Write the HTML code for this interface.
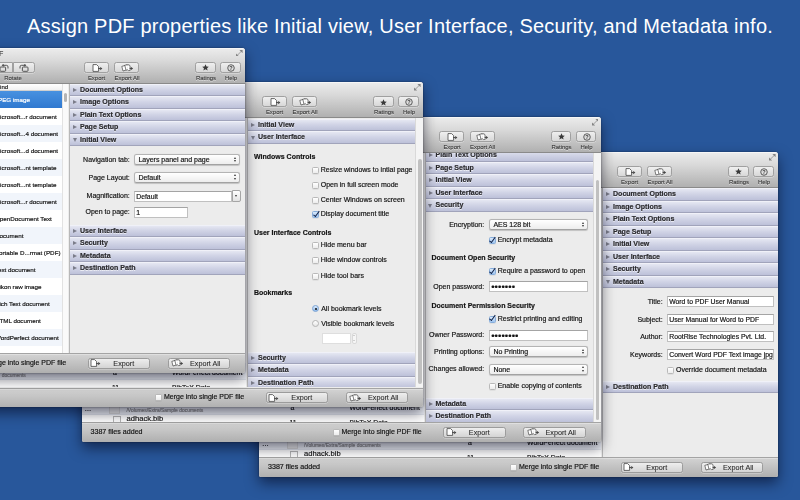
<!DOCTYPE html>
<html lang="en"><head><meta charset="utf-8"><title>Assign PDF properties</title>
<style>
*{box-sizing:border-box}
html,body{margin:0;padding:0}
body{width:800px;height:500px;overflow:hidden;position:relative;background:#28579b;font-family:"Liberation Sans",sans-serif;font-size:7px;color:#141414;line-height:8px}
.win{-webkit-text-stroke:.18px currentColor;filter:blur(.38px)}
.title{position:absolute;left:0;top:13.2px;width:800px;text-align:center;color:#fff;font-size:20px;line-height:26px;white-space:nowrap;letter-spacing:.215px}
.win{position:absolute;width:519px;height:325px;border-radius:3px 3px 2px 2px;box-shadow:0 6px 14px rgba(0,0,20,.55),0 0 2px rgba(0,0,0,.5);background:#ececec;overflow:hidden}
.a{position:absolute;white-space:nowrap}
.tb{position:absolute;left:0;top:0;width:519px;height:36px;background:linear-gradient(#ebebeb 0%,#d9d9d9 35%,#b0b0b0 100%);border-bottom:1px solid #8a8a8a;border-top:1px solid #f6f6f6}
.bb{position:absolute;left:0;top:305.3px;width:519px;height:20px;background:linear-gradient(#d3d3d3,#afafaf);border-top:1px solid #a4a4a4;box-shadow:inset 0 1px 0 rgba(255,255,255,.3)}
.tbtn{position:absolute;height:11px;border:1px solid #a0a0a0;border-radius:2.5px;background:linear-gradient(#efefef,#d8d8d8);box-shadow:0 .5px 0 rgba(255,255,255,.6)}
.tlab{position:absolute;font-size:5.95px;color:#383838;-webkit-text-stroke:.1px currentColor;text-align:center;width:40px;text-shadow:0 .5px 0 rgba(255,255,255,.6)}
.bbtn{position:absolute;top:310px;height:11px;border:1px solid #9c9c9c;border-radius:2.5px;background:linear-gradient(#eeeeee,#d4d4d4);font-size:7.2px;line-height:9px;text-align:center;color:#2b2b2b;-webkit-text-stroke:.08px currentColor;box-shadow:0 .5px 0 rgba(255,255,255,.5)}
.list{position:absolute;left:0;top:36px;width:342px;height:269px;background:#fff;overflow:hidden}
.row{position:absolute;left:0;width:336px;height:17px}
.row.alt{background:#f1f5fb}
.row.sel{background:linear-gradient(#4891e0,#3079d0);color:#fff}
.panel{position:absolute;left:343px;top:36px;width:176px;height:269px;background:#ececec;overflow:hidden;border-left:1px solid #b8b8b8}
.hd{position:absolute;left:0;height:12.5px;background:linear-gradient(#e5e7f2 0%,#d1d4e6 45%,#bdc1d9 100%);border-bottom:1px solid #a1a4bb;border-top:1px solid #f0f1f8;font-weight:bold;font-size:7.05px;color:#2a2a2e;line-height:10px;text-shadow:0 .5px 0 rgba(255,255,255,.7);white-space:nowrap}
.hd i{position:absolute;left:3px;top:3px;width:0;height:0;border-style:solid}
.hd i.r{border-width:2.2px 0 2.2px 4px;border-color:transparent transparent transparent #7b7d8a}
.hd i.d{left:2.5px;top:3.6px;border-width:4px 2.3px 0 2.3px;border-color:#7b7d8a transparent transparent transparent}
.hd span{position:absolute;left:10px;top:0}
.lab{position:absolute;text-align:right;white-space:nowrap;width:80px;font-size:7px}
.b{font-weight:bold;font-size:7px}
.pop{position:absolute;height:11px;border:1px solid #b4b4b4;border-bottom-color:#a2a2a2;border-radius:2.5px;background:linear-gradient(#ffffff,#ededed);font-size:7px;line-height:9px;padding-left:3.4px;white-space:nowrap;box-shadow:0 .5px .8px rgba(0,0,0,.18)}
.pop:after{content:"";position:absolute;right:3px;top:1.6px;border:1.4px solid transparent;border-bottom:2px solid #333;border-top:0}
.pop:before{content:"";position:absolute;right:3px;top:5.2px;border:1.4px solid transparent;border-top:2px solid #333;border-bottom:0}
.fld{position:absolute;height:11px;border:1px solid #c0c0c0;border-top-color:#a4a4a4;background:#fff;font-size:6.85px;line-height:9px;padding-left:1.2px;white-space:nowrap;overflow:hidden}
.cb{position:absolute;width:7px;height:7px;border:1px solid #b9b9b9;border-radius:1.5px;background:linear-gradient(#fff,#ececec);box-shadow:0 .5px .5px rgba(0,0,0,.1)}
.cb.on{background:linear-gradient(#dbeafb,#9dc4ef);border-color:#86addb}
.cb.on:after{content:"";position:absolute;left:1.5px;top:-2.6px;width:2.3px;height:5.6px;border:solid #13244a;border-width:0 1.35px 1.35px 0;transform:rotate(36deg)}
.rd{position:absolute;width:7px;height:7px;border:1px solid #b4b4b4;border-radius:50%;background:linear-gradient(#fff,#e6e6e6)}
.rd.on{background:linear-gradient(#dbeafb,#8fbaec);border-color:#7ba3d4}
.rd.on:after{content:"";position:absolute;left:1.5px;top:1.5px;width:2px;height:2px;border-radius:50%;background:#111}
.sb{position:absolute;left:167px;top:0;width:8px;height:269px;background:#f4f4f4;border-left:1px solid #d9d9d9}
.sb b{position:absolute;left:2px;width:3.5px;border-radius:2px;background:#c0c0c0}
.g{color:#8a8a8a;font-size:4.95px;line-height:6.6px}
</style></head>
<body>
<div class="title">Assign PDF properties like Initial view, User Interface, Security, and Metadata info.</div>
<div class="win" style="left:259px;top:152px"><div class="list"><div class="a" style="left:0;top:245px;width:342px;height:17px;background:#eff2f8;border-bottom:1px solid #e3e7ee"></div><div class="a" style="left:3px;top:251.5px;font-size:6.9px">&hellip;</div><div class="a" style="left:3px;top:264.5px;font-size:6.9px">&hellip;</div><div class="a" style="left:27.5px;top:246px;width:11px;height:15px;background:#ececec;border:1px solid #dadada"></div><div class="a" style="left:31px;top:263.3px;width:8px;height:11px;background:#fdfdfd;border:1px solid #b5b5b5"></div><div class="a g" style="left:45px;top:255.2px">/Volumes/Extra/Sample documents</div><div class="a" style="left:45px;top:262.4px;font-size:7.6px">adhack.bib</div><div class="a" style="left:268px;top:250.8px;font-size:6.9px">WordPerfect document</div><div class="a" style="left:209px;top:250.8px;font-size:6.9px">a</div><div class="a" style="left:208px;top:266px;font-size:6.9px">11</div><div class="a" style="left:268px;top:266px;font-size:6.9px">BibTeX Data&hellip;</div></div><div class="panel"><div class="hd" style="top:0px;width:176px"><i class="r"></i><span>Document Options</span></div><div class="hd" style="top:12.5px;width:176px"><i class="r"></i><span>Image Options</span></div><div class="hd" style="top:25.0px;width:176px"><i class="r"></i><span>Plain Text Options</span></div><div class="hd" style="top:37.5px;width:176px"><i class="r"></i><span>Page Setup</span></div><div class="hd" style="top:50.0px;width:176px"><i class="r"></i><span>Initial View</span></div><div class="hd" style="top:62.5px;width:176px"><i class="r"></i><span>User Interface</span></div><div class="hd" style="top:75.0px;width:176px"><i class="r"></i><span>Security</span></div><div class="hd" style="top:87.5px;width:176px"><i class="d"></i><span>Metadata</span></div><div class="lab" style="left:-20.299999999999997px;top:109.5px">Title:</div><div class="fld" style="left:64px;top:107.9px;width:107px">Word to PDF User Manual</div><div class="lab" style="left:-20.299999999999997px;top:127.60000000000001px">Subject:</div><div class="fld" style="left:64px;top:125.6px;width:107px">User Manual for Word to PDF</div><div class="lab" style="left:-20.299999999999997px;top:144.5px">Author:</div><div class="fld" style="left:64px;top:143.0px;width:107px">RootRise Technologies Pvt. Ltd.</div><div class="lab" style="left:-20.299999999999997px;top:162.6px">Keywords:</div><div class="fld" style="left:64px;top:160.5px;width:107px">Convert Word PDF Text image jpg png</div><div class="cb" style="left:64.2px;top:179.0px"></div><div class="a " style="left:73px;top:178.0px">Override document metadata</div><div class="hd" style="top:192.75px;width:176px"><i class="r"></i><span>Destination Path</span></div></div><div class="tb"><div class="tbtn" style="left:357.8px;top:13.2px;width:24.8px"></div><svg class="a" style="left:365.5px;top:15.1px" width="11" height="8" viewBox="0 0 11 8"><path d="M1 .6h3.6l2 2V7.4H1z" fill="#fff" stroke="#444" stroke-width=".8"/><path d="M6.2 4.6h2.2" stroke="#444" stroke-width="1"/><path d="M8.2 3l2.2 1.6-2.2 1.6z" fill="#444"/></svg><div class="tlab" style="left:350.5px;top:25px">Export</div><div class="tbtn" style="left:388px;top:13.2px;width:25px"></div><svg class="a" style="left:394.5px;top:15.1px" width="13" height="8" viewBox="0 0 13 8"><path d="M.8 2.4l3-.9 1.2 4.6-3 .9z M3.2 1.5l3-.9 1.4 4.8-2.6.9" fill="#fff" stroke="#444" stroke-width=".7"/><path d="M5.6 1l2.6-.2.8 1.2.2 4.4-2 .2" fill="#fff" stroke="#444" stroke-width=".7"/><path d="M8.6 4.4h1.6" stroke="#444" stroke-width="1"/><path d="M10 2.9l2.2 1.5L10 5.9z" fill="#444"/></svg><div class="tlab" style="left:381px;top:25px">Export All</div><div class="tbtn" style="left:469.2px;top:13.2px;width:20.6px"></div><svg class="a" style="left:476px;top:15.4px" width="7" height="7" viewBox="0 0 10 10"><path d="M5 .4l1.4 3.1 3.3.3-2.5 2.2.8 3.3L5 7.6 2 9.3l.8-3.3L.3 3.8l3.3-.3z" fill="#3a3a3a"/></svg><div class="tlab" style="left:460px;top:25px">Ratings</div><div class="tbtn" style="left:494.2px;top:13.2px;width:20.6px"></div><svg class="a" style="left:501px;top:15.2px" width="8" height="8" viewBox="0 0 10 10"><circle cx="5" cy="5" r="4.1" fill="none" stroke="#3a3a3a" stroke-width="1"/><text x="5" y="7.6" font-size="7" font-weight="bold" text-anchor="middle" fill="#3a3a3a" font-family="Liberation Sans, sans-serif">?</text></svg><div class="tlab" style="left:485px;top:25px">Help</div><svg class="a" style="left:510.2px;top:1px" width="6.6" height="6.6" viewBox="0 0 7 7"><path d="M3.6 0H7v3.4z M0 3.6V7h3.4z" fill="#858585"/><path d="M6 1L1 6" stroke="#858585" stroke-width=".8"/></svg></div><div class="bb"></div><div class="a" style="left:9px;top:311.2px;font-size:7.1px">3387 files added</div><div class="cb" style="left:251.4px;top:311.6px"></div><div class="a" style="left:260px;top:311.2px;font-size:7px">Merge into single PDF file</div><div class="bbtn" style="left:361.5px;width:62.5px;padding-left:10px">Export</div><svg class="a" style="left:364.2px;top:311.3px" width="11" height="8" viewBox="0 0 11 8"><path d="M1 .6h3.6l2 2V7.4H1z" fill="#fff" stroke="#444" stroke-width=".8"/><path d="M6.2 4.6h2.2" stroke="#444" stroke-width="1"/><path d="M8.2 3l2.2 1.6-2.2 1.6z" fill="#444"/></svg><div class="bbtn" style="left:441.5px;width:62.5px;padding-left:13px">Export All</div><svg class="a" style="left:445px;top:311.3px" width="13" height="8" viewBox="0 0 13 8"><path d="M.8 2.4l3-.9 1.2 4.6-3 .9z M3.2 1.5l3-.9 1.4 4.8-2.6.9" fill="#fff" stroke="#444" stroke-width=".7"/><path d="M5.6 1l2.6-.2.8 1.2.2 4.4-2 .2" fill="#fff" stroke="#444" stroke-width=".7"/><path d="M8.6 4.4h1.6" stroke="#444" stroke-width="1"/><path d="M10 2.9l2.2 1.5L10 5.9z" fill="#444"/></svg></div>
<div class="win" style="left:81.5px;top:117px"><div class="list"><div class="a" style="left:0;top:245px;width:342px;height:17px;background:#eff2f8;border-bottom:1px solid #e3e7ee"></div><div class="a" style="left:3px;top:251.5px;font-size:6.9px">&hellip;</div><div class="a" style="left:3px;top:264.5px;font-size:6.9px">&hellip;</div><div class="a" style="left:27.5px;top:246px;width:11px;height:15px;background:#ececec;border:1px solid #dadada"></div><div class="a" style="left:31px;top:263.3px;width:8px;height:11px;background:#fdfdfd;border:1px solid #b5b5b5"></div><div class="a g" style="left:45px;top:255.2px">/Volumes/Extra/Sample documents</div><div class="a" style="left:45px;top:262.4px;font-size:7.6px">adhack.bib</div><div class="a" style="left:268px;top:250.8px;font-size:6.9px">WordPerfect document</div><div class="a" style="left:209px;top:250.8px;font-size:6.9px">a</div><div class="a" style="left:208px;top:266px;font-size:6.9px">11</div><div class="a" style="left:268px;top:266px;font-size:6.9px">BibTeX Data&hellip;</div></div><div class="panel" style="top:35px;height:270px"><div class="hd" style="top:-3px;width:167px"><i class="r"></i><span>Plain Text Options</span></div><div class="hd" style="top:9.5px;width:167px"><i class="r"></i><span>Page Setup</span></div><div class="hd" style="top:22.0px;width:167px"><i class="r"></i><span>Initial View</span></div><div class="hd" style="top:34.5px;width:167px"><i class="r"></i><span>User Interface</span></div><div class="hd" style="top:47.0px;width:167px"><i class="d"></i><span>Security</span></div><div class="lab" style="left:-21.299999999999997px;top:68.5px">Encryption:</div><div class="pop" style="left:63.5px;top:67.1px;width:98.5px">AES 128 bit</div><div class="cb on" style="left:63.2px;top:85.10000000000001px"></div><div class="a " style="left:72.2px;top:84.10000000000001px">Encrypt metadata</div><div class="a b" style="left:6px;top:102.2px">Document Open Security</div><div class="cb on" style="left:63.2px;top:116.2px"></div><div class="a " style="left:72.2px;top:115.2px">Require a password to open</div><div class="lab" style="left:-21.299999999999997px;top:130.5px">Open password:</div><div class="fld" style="left:63.5px;top:129.1px;width:98.5px"><span style="font-size:9.6px;letter-spacing:.05px">&bull;&bull;&bull;&bull;&bull;&bull;&bull;</span></div><div class="a b" style="left:6px;top:150.2px">Document Permission Security</div><div class="cb on" style="left:63.2px;top:163.7px"></div><div class="a " style="left:72.2px;top:162.7px">Restrict printing and editing</div><div class="lab" style="left:-21.299999999999997px;top:178.89999999999998px">Owner Password:</div><div class="fld" style="left:63.5px;top:177.5px;width:98.5px"><span style="font-size:9.6px;letter-spacing:.05px">&bull;&bull;&bull;&bull;&bull;&bull;&bull;&bull;</span></div><div class="lab" style="left:-21.299999999999997px;top:196.2px">Printing options:</div><div class="pop" style="left:63.5px;top:194.1px;width:98.5px">No Printing</div><div class="lab" style="left:-21.299999999999997px;top:213.2px">Changes allowed:</div><div class="pop" style="left:63.5px;top:211.5px;width:98.5px">None</div><div class="cb" style="left:63.2px;top:231.2px"></div><div class="a " style="left:72.2px;top:230.2px">Enable copying of contents</div><div class="hd" style="top:245.5px;width:167px"><i class="r"></i><span>Metadata</span></div><div class="hd" style="top:258px;width:167px"><i class="r"></i><span>Destination Path</span></div><div class="sb" style="height:270px"><b style="top:28px;height:240px"></b></div></div><div class="tb"><div class="tbtn" style="left:357.8px;top:13.2px;width:24.8px"></div><svg class="a" style="left:365.5px;top:15.1px" width="11" height="8" viewBox="0 0 11 8"><path d="M1 .6h3.6l2 2V7.4H1z" fill="#fff" stroke="#444" stroke-width=".8"/><path d="M6.2 4.6h2.2" stroke="#444" stroke-width="1"/><path d="M8.2 3l2.2 1.6-2.2 1.6z" fill="#444"/></svg><div class="tlab" style="left:350.5px;top:25px">Export</div><div class="tbtn" style="left:388px;top:13.2px;width:25px"></div><svg class="a" style="left:394.5px;top:15.1px" width="13" height="8" viewBox="0 0 13 8"><path d="M.8 2.4l3-.9 1.2 4.6-3 .9z M3.2 1.5l3-.9 1.4 4.8-2.6.9" fill="#fff" stroke="#444" stroke-width=".7"/><path d="M5.6 1l2.6-.2.8 1.2.2 4.4-2 .2" fill="#fff" stroke="#444" stroke-width=".7"/><path d="M8.6 4.4h1.6" stroke="#444" stroke-width="1"/><path d="M10 2.9l2.2 1.5L10 5.9z" fill="#444"/></svg><div class="tlab" style="left:381px;top:25px">Export All</div><div class="tbtn" style="left:469.2px;top:13.2px;width:20.6px"></div><svg class="a" style="left:476px;top:15.4px" width="7" height="7" viewBox="0 0 10 10"><path d="M5 .4l1.4 3.1 3.3.3-2.5 2.2.8 3.3L5 7.6 2 9.3l.8-3.3L.3 3.8l3.3-.3z" fill="#3a3a3a"/></svg><div class="tlab" style="left:460px;top:25px">Ratings</div><div class="tbtn" style="left:494.2px;top:13.2px;width:20.6px"></div><svg class="a" style="left:501px;top:15.2px" width="8" height="8" viewBox="0 0 10 10"><circle cx="5" cy="5" r="4.1" fill="none" stroke="#3a3a3a" stroke-width="1"/><text x="5" y="7.6" font-size="7" font-weight="bold" text-anchor="middle" fill="#3a3a3a" font-family="Liberation Sans, sans-serif">?</text></svg><div class="tlab" style="left:485px;top:25px">Help</div><svg class="a" style="left:510.2px;top:1px" width="6.6" height="6.6" viewBox="0 0 7 7"><path d="M3.6 0H7v3.4z M0 3.6V7h3.4z" fill="#858585"/><path d="M6 1L1 6" stroke="#858585" stroke-width=".8"/></svg></div><div class="bb"></div><div class="a" style="left:9px;top:311.2px;font-size:7.1px">3387 files added</div><div class="cb" style="left:251.4px;top:311.6px"></div><div class="a" style="left:260px;top:311.2px;font-size:7px">Merge into single PDF file</div><div class="bbtn" style="left:361.5px;width:62.5px;padding-left:10px">Export</div><svg class="a" style="left:364.2px;top:311.3px" width="11" height="8" viewBox="0 0 11 8"><path d="M1 .6h3.6l2 2V7.4H1z" fill="#fff" stroke="#444" stroke-width=".8"/><path d="M6.2 4.6h2.2" stroke="#444" stroke-width="1"/><path d="M8.2 3l2.2 1.6-2.2 1.6z" fill="#444"/></svg><div class="bbtn" style="left:441.5px;width:62.5px;padding-left:13px">Export All</div><svg class="a" style="left:445px;top:311.3px" width="13" height="8" viewBox="0 0 13 8"><path d="M.8 2.4l3-.9 1.2 4.6-3 .9z M3.2 1.5l3-.9 1.4 4.8-2.6.9" fill="#fff" stroke="#444" stroke-width=".7"/><path d="M5.6 1l2.6-.2.8 1.2.2 4.4-2 .2" fill="#fff" stroke="#444" stroke-width=".7"/><path d="M8.6 4.4h1.6" stroke="#444" stroke-width="1"/><path d="M10 2.9l2.2 1.5L10 5.9z" fill="#444"/></svg></div>
<div class="win" style="left:-96px;top:82.3px"><div class="list"><div class="a" style="left:0;top:245px;width:342px;height:17px;background:#eff2f8;border-bottom:1px solid #e3e7ee"></div><div class="a" style="left:3px;top:251.5px;font-size:6.9px">&hellip;</div><div class="a" style="left:3px;top:264.5px;font-size:6.9px">&hellip;</div><div class="a" style="left:27.5px;top:246px;width:11px;height:15px;background:#ececec;border:1px solid #dadada"></div><div class="a" style="left:31px;top:263.3px;width:8px;height:11px;background:#fdfdfd;border:1px solid #b5b5b5"></div><div class="a g" style="left:45px;top:255.2px">/Volumes/Extra/Sample documents</div><div class="a" style="left:45px;top:262.4px;font-size:7.6px">adhack.bib</div><div class="a" style="left:268px;top:250.8px;font-size:6.9px">WordPerfect document</div><div class="a" style="left:209px;top:250.8px;font-size:6.9px">a</div><div class="a" style="left:208px;top:266px;font-size:6.9px">11</div><div class="a" style="left:268px;top:266px;font-size:6.9px">BibTeX Data&hellip;</div></div><div class="panel"><div class="hd" style="top:0.5px;width:167px"><i class="r"></i><span>Initial View</span></div><div class="hd" style="top:13px;width:167px"><i class="d"></i><span>User Interface</span></div><div class="a b" style="left:6px;top:34.7px">Windows Controls</div><div class="cb" style="left:64.2px;top:48.5px"></div><div class="a " style="left:72.7px;top:47.5px">Resize windows to intial page</div><div class="cb" style="left:64.2px;top:63.5px"></div><div class="a " style="left:72.7px;top:62.5px">Open in full screen mode</div><div class="cb" style="left:64.2px;top:78.3px"></div><div class="a " style="left:72.7px;top:77.3px">Center Windows on screen</div><div class="cb on" style="left:64.2px;top:93.2px"></div><div class="a " style="left:72.7px;top:92.2px">Display document title</div><div class="a b" style="left:6px;top:110.45px">User Interface Controls</div><div class="cb" style="left:64.2px;top:124.2px"></div><div class="a " style="left:72.7px;top:123.2px">Hide menu bar</div><div class="cb" style="left:64.2px;top:139.2px"></div><div class="a " style="left:72.7px;top:138.2px">Hide window controls</div><div class="cb" style="left:64.2px;top:154.39999999999998px"></div><div class="a " style="left:72.7px;top:153.39999999999998px">Hide tool bars</div><div class="a b" style="left:6px;top:170.5px">Bookmarks</div><div class="rd on" style="left:64.3px;top:186.8px"></div><div class="a " style="left:73.2px;top:186.6px">All bookmark levels</div><div class="rd" style="left:64.3px;top:201.9px"></div><div class="a " style="left:73.2px;top:201.7px">Visible bookmark levels</div><div class="fld" style="left:74px;top:215px;width:29px;height:10.5px;border-color:#dedede"></div><div class="a" style="left:103.5px;top:215px;width:5px;height:10.5px;border:1px solid #d9d9d9;border-radius:2px;background:#f6f6f6"></div><i class="a" style="left:104.7px;top:217px;border:1.3px solid transparent;border-bottom:1.8px solid #aaa;border-top:0"></i><i class="a" style="left:104.7px;top:221.6px;border:1.3px solid transparent;border-top:1.8px solid #aaa;border-bottom:0"></i><div class="hd" style="top:233.3px;width:167px"><i class="r"></i><span>Security</span></div><div class="hd" style="top:245.8px;width:167px"><i class="r"></i><span>Metadata</span></div><div class="hd" style="top:258.3px;width:167px"><i class="r"></i><span>Destination Path</span></div><div class="sb"><b style="top:41px;height:225px"></b></div></div><div class="tb"><div class="tbtn" style="left:357.8px;top:13.2px;width:24.8px"></div><svg class="a" style="left:365.5px;top:15.1px" width="11" height="8" viewBox="0 0 11 8"><path d="M1 .6h3.6l2 2V7.4H1z" fill="#fff" stroke="#444" stroke-width=".8"/><path d="M6.2 4.6h2.2" stroke="#444" stroke-width="1"/><path d="M8.2 3l2.2 1.6-2.2 1.6z" fill="#444"/></svg><div class="tlab" style="left:350.5px;top:25px">Export</div><div class="tbtn" style="left:388px;top:13.2px;width:25px"></div><svg class="a" style="left:394.5px;top:15.1px" width="13" height="8" viewBox="0 0 13 8"><path d="M.8 2.4l3-.9 1.2 4.6-3 .9z M3.2 1.5l3-.9 1.4 4.8-2.6.9" fill="#fff" stroke="#444" stroke-width=".7"/><path d="M5.6 1l2.6-.2.8 1.2.2 4.4-2 .2" fill="#fff" stroke="#444" stroke-width=".7"/><path d="M8.6 4.4h1.6" stroke="#444" stroke-width="1"/><path d="M10 2.9l2.2 1.5L10 5.9z" fill="#444"/></svg><div class="tlab" style="left:381px;top:25px">Export All</div><div class="tbtn" style="left:469.2px;top:13.2px;width:20.6px"></div><svg class="a" style="left:476px;top:15.4px" width="7" height="7" viewBox="0 0 10 10"><path d="M5 .4l1.4 3.1 3.3.3-2.5 2.2.8 3.3L5 7.6 2 9.3l.8-3.3L.3 3.8l3.3-.3z" fill="#3a3a3a"/></svg><div class="tlab" style="left:460px;top:25px">Ratings</div><div class="tbtn" style="left:494.2px;top:13.2px;width:20.6px"></div><svg class="a" style="left:501px;top:15.2px" width="8" height="8" viewBox="0 0 10 10"><circle cx="5" cy="5" r="4.1" fill="none" stroke="#3a3a3a" stroke-width="1"/><text x="5" y="7.6" font-size="7" font-weight="bold" text-anchor="middle" fill="#3a3a3a" font-family="Liberation Sans, sans-serif">?</text></svg><div class="tlab" style="left:485px;top:25px">Help</div><svg class="a" style="left:510.2px;top:1px" width="6.6" height="6.6" viewBox="0 0 7 7"><path d="M3.6 0H7v3.4z M0 3.6V7h3.4z" fill="#858585"/><path d="M6 1L1 6" stroke="#858585" stroke-width=".8"/></svg></div><div class="bb"></div><div class="a" style="left:9px;top:311.2px;font-size:7.1px">3387 files added</div><div class="cb" style="left:251.4px;top:311.6px"></div><div class="a" style="left:260px;top:311.2px;font-size:7px">Merge into single PDF file</div><div class="bbtn" style="left:361.5px;width:62.5px;padding-left:10px">Export</div><svg class="a" style="left:364.2px;top:311.3px" width="11" height="8" viewBox="0 0 11 8"><path d="M1 .6h3.6l2 2V7.4H1z" fill="#fff" stroke="#444" stroke-width=".8"/><path d="M6.2 4.6h2.2" stroke="#444" stroke-width="1"/><path d="M8.2 3l2.2 1.6-2.2 1.6z" fill="#444"/></svg><div class="bbtn" style="left:441.5px;width:62.5px;padding-left:13px">Export All</div><svg class="a" style="left:445px;top:311.3px" width="13" height="8" viewBox="0 0 13 8"><path d="M.8 2.4l3-.9 1.2 4.6-3 .9z M3.2 1.5l3-.9 1.4 4.8-2.6.9" fill="#fff" stroke="#444" stroke-width=".7"/><path d="M5.6 1l2.6-.2.8 1.2.2 4.4-2 .2" fill="#fff" stroke="#444" stroke-width=".7"/><path d="M8.6 4.4h1.6" stroke="#444" stroke-width="1"/><path d="M10 2.9l2.2 1.5L10 5.9z" fill="#444"/></svg></div>
<div class="win" style="left:-274px;top:47.5px"><div class="list"><div class="a" style="left:0;top:0;width:336px;height:7.5px;background:linear-gradient(#fff,#f1f1f1);border-bottom:1px solid #d0d0d0"></div><div class="a" style="left:270px;top:-0.3px;font-size:6.1px;color:#222">Kind</div><div class="row sel" style="top:7.5px"><div class="a" style="left:268.9px;top:4.5px;font-size:6.25px">JPEG image</div></div><div class="row" style="top:24.5px"><div class="a" style="left:268.9px;top:4.5px;font-size:6.25px">Microsoft...r document</div></div><div class="row alt" style="top:41.5px"><div class="a" style="left:268.9px;top:4.5px;font-size:6.25px">Microsoft...4 document</div></div><div class="row" style="top:58.5px"><div class="a" style="left:268.9px;top:4.5px;font-size:6.25px">Microsoft...d document</div></div><div class="row alt" style="top:75.5px"><div class="a" style="left:268.9px;top:4.5px;font-size:6.25px">Microsoft...nt template</div></div><div class="row" style="top:92.5px"><div class="a" style="left:268.9px;top:4.5px;font-size:6.25px">Microsoft...nt template</div></div><div class="row alt" style="top:109.5px"><div class="a" style="left:268.9px;top:4.5px;font-size:6.25px">Microsoft...r document</div></div><div class="row" style="top:126.5px"><div class="a" style="left:268.9px;top:4.5px;font-size:6.25px">OpenDocument Text</div></div><div class="row alt" style="top:143.5px"><div class="a" style="left:268.9px;top:4.5px;font-size:6.25px">Document</div></div><div class="row" style="top:160.5px"><div class="a" style="left:268.9px;top:4.5px;font-size:6.25px">Portable D...rmat (PDF)</div></div><div class="row alt" style="top:177.5px"><div class="a" style="left:268.9px;top:4.5px;font-size:6.25px">Text document</div></div><div class="row" style="top:194.5px"><div class="a" style="left:268.9px;top:4.5px;font-size:6.25px">Nikon raw image</div></div><div class="row alt" style="top:211.5px"><div class="a" style="left:268.9px;top:4.5px;font-size:6.25px">Rich Text document</div></div><div class="row" style="top:228.5px"><div class="a" style="left:268.9px;top:4.5px;font-size:6.25px">HTML document</div></div><div class="row alt" style="top:245.5px"><div class="a" style="left:268.9px;top:4.5px;font-size:6.25px">WordPerfect document</div></div><div class="row" style="top:262.5px"><div class="a" style="left:268.9px;top:4.5px;font-size:6.25px">BibTeX document</div></div><div class="a" style="left:336px;top:0;width:6px;height:269px;background:#fafafa;border-left:1px solid #e2e2e2"></div><div class="a" style="left:338px;top:9px;width:3px;height:9px;border-radius:1.5px;background:#b5b5b5"></div></div><div class="panel"><div class="hd" style="top:0px;width:176px"><i class="r"></i><span>Document Options</span></div><div class="hd" style="top:12.5px;width:176px"><i class="r"></i><span>Image Options</span></div><div class="hd" style="top:25.0px;width:176px"><i class="r"></i><span>Plain Text Options</span></div><div class="hd" style="top:37.5px;width:176px"><i class="r"></i><span>Page Setup</span></div><div class="hd" style="top:50.0px;width:176px"><i class="d"></i><span>Initial View</span></div><div class="lab" style="left:-20.200000000000003px;top:72.0px">Navigation tab:</div><div class="pop" style="left:64px;top:70.6px;width:106px">Layers panel and page</div><div class="lab" style="left:-20.200000000000003px;top:90.10000000000001px">Page Layout:</div><div class="pop" style="left:64px;top:88.3px;width:106px">Default</div><div class="lab" style="left:-20.200000000000003px;top:108.5px">Magnification:</div><div class="fld" style="left:64px;top:107.0px;width:97.5px">Default</div><div class="a" style="left:162px;top:106.9px;width:8.5px;height:11.5px;border:1px solid #a5a5a5;border-radius:0 2px 2px 0;background:linear-gradient(#fff,#e2e2e2)"><i style="position:absolute;left:1.8px;top:3.6px;border:1.6px solid transparent;border-top:2.4px solid #333;border-bottom:0"></i></div><div class="lab" style="left:-20.200000000000003px;top:124.89999999999999px">Open to page:</div><div class="fld" style="left:64px;top:123.80000000000001px;width:54px">1</div><div class="hd" style="top:141.3px;width:176px"><i class="r"></i><span>User Interface</span></div><div class="hd" style="top:153.8px;width:176px"><i class="r"></i><span>Security</span></div><div class="hd" style="top:166.3px;width:176px"><i class="r"></i><span>Metadata</span></div><div class="hd" style="top:178.8px;width:176px"><i class="r"></i><span>Destination Path</span></div></div><div class="tb"><div class="a" style="left:263.3px;top:1.6px;font-size:7px;color:#333">PDF</div><div class="tbtn" style="left:264px;top:13.2px;width:23px;border-radius:2.5px 0 0 2.5px"></div><div class="tbtn" style="left:286.5px;top:13.2px;width:22px;border-radius:0 2.5px 2.5px 0"></div><svg class="a" style="left:273px;top:15.0px" width="10" height="8" viewBox="0 0 10 8"><rect x="1" y="3" width="5.6" height="4.3" rx=".8" fill="none" stroke="#444" stroke-width=".9"/><path d="M4 1.3h3.4a1.6 1.6 0 0 1 1.6 1.6v1.6" fill="none" stroke="#444" stroke-width=".9"/><path d="M4.6 -.2L2.6 1.3l2 1.5z" fill="#444"/></svg><svg class="a" style="left:292.5px;top:15.0px" width="10" height="8" viewBox="0 0 10 8"><rect x="3.4" y="3" width="5.6" height="4.3" rx=".8" fill="none" stroke="#444" stroke-width=".9"/><path d="M6 1.3H2.6A1.6 1.6 0 0 0 1 2.9v1.6" fill="none" stroke="#444" stroke-width=".9"/><path d="M5.4 -.2l2 1.5-2 1.5z" fill="#444"/></svg><div class="tlab" style="left:267px;top:25px">Rotate</div><div class="tbtn" style="left:357.8px;top:13.2px;width:24.8px"></div><svg class="a" style="left:365.5px;top:15.1px" width="11" height="8" viewBox="0 0 11 8"><path d="M1 .6h3.6l2 2V7.4H1z" fill="#fff" stroke="#444" stroke-width=".8"/><path d="M6.2 4.6h2.2" stroke="#444" stroke-width="1"/><path d="M8.2 3l2.2 1.6-2.2 1.6z" fill="#444"/></svg><div class="tlab" style="left:350.5px;top:25px">Export</div><div class="tbtn" style="left:388px;top:13.2px;width:25px"></div><svg class="a" style="left:394.5px;top:15.1px" width="13" height="8" viewBox="0 0 13 8"><path d="M.8 2.4l3-.9 1.2 4.6-3 .9z M3.2 1.5l3-.9 1.4 4.8-2.6.9" fill="#fff" stroke="#444" stroke-width=".7"/><path d="M5.6 1l2.6-.2.8 1.2.2 4.4-2 .2" fill="#fff" stroke="#444" stroke-width=".7"/><path d="M8.6 4.4h1.6" stroke="#444" stroke-width="1"/><path d="M10 2.9l2.2 1.5L10 5.9z" fill="#444"/></svg><div class="tlab" style="left:381px;top:25px">Export All</div><div class="tbtn" style="left:469.2px;top:13.2px;width:20.6px"></div><svg class="a" style="left:476px;top:15.4px" width="7" height="7" viewBox="0 0 10 10"><path d="M5 .4l1.4 3.1 3.3.3-2.5 2.2.8 3.3L5 7.6 2 9.3l.8-3.3L.3 3.8l3.3-.3z" fill="#3a3a3a"/></svg><div class="tlab" style="left:460px;top:25px">Ratings</div><div class="tbtn" style="left:494.2px;top:13.2px;width:20.6px"></div><svg class="a" style="left:501px;top:15.2px" width="8" height="8" viewBox="0 0 10 10"><circle cx="5" cy="5" r="4.1" fill="none" stroke="#3a3a3a" stroke-width="1"/><text x="5" y="7.6" font-size="7" font-weight="bold" text-anchor="middle" fill="#3a3a3a" font-family="Liberation Sans, sans-serif">?</text></svg><div class="tlab" style="left:485px;top:25px">Help</div><svg class="a" style="left:510.2px;top:1px" width="6.6" height="6.6" viewBox="0 0 7 7"><path d="M3.6 0H7v3.4z M0 3.6V7h3.4z" fill="#858585"/><path d="M6 1L1 6" stroke="#858585" stroke-width=".8"/></svg></div><div class="bb"></div><div class="a" style="left:9px;top:311.2px;font-size:7.1px">3387 files added</div><div class="cb" style="left:251.4px;top:311.6px"></div><div class="a" style="left:260px;top:311.2px;font-size:7px">Merge into single PDF file</div><div class="bbtn" style="left:361.5px;width:62.5px;padding-left:10px">Export</div><svg class="a" style="left:364.2px;top:311.3px" width="11" height="8" viewBox="0 0 11 8"><path d="M1 .6h3.6l2 2V7.4H1z" fill="#fff" stroke="#444" stroke-width=".8"/><path d="M6.2 4.6h2.2" stroke="#444" stroke-width="1"/><path d="M8.2 3l2.2 1.6-2.2 1.6z" fill="#444"/></svg><div class="bbtn" style="left:441.5px;width:62.5px;padding-left:13px">Export All</div><svg class="a" style="left:445px;top:311.3px" width="13" height="8" viewBox="0 0 13 8"><path d="M.8 2.4l3-.9 1.2 4.6-3 .9z M3.2 1.5l3-.9 1.4 4.8-2.6.9" fill="#fff" stroke="#444" stroke-width=".7"/><path d="M5.6 1l2.6-.2.8 1.2.2 4.4-2 .2" fill="#fff" stroke="#444" stroke-width=".7"/><path d="M8.6 4.4h1.6" stroke="#444" stroke-width="1"/><path d="M10 2.9l2.2 1.5L10 5.9z" fill="#444"/></svg></div>
</body></html>
